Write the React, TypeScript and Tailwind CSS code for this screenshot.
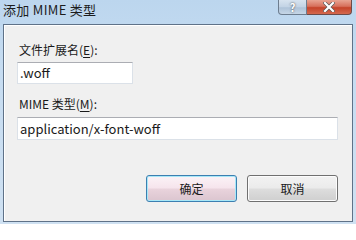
import React from "react";

const font = { fontFamily: '"Noto Sans CJK SC", "Liberation Sans", sans-serif' };

export default function App() {
  return (
    <div
      className="w-[356px] h-[224px] flex flex-col bg-[linear-gradient(180deg,#bcd6ee_0%,#c6dcf1_30%,#cfe1f2_100%)] overflow-hidden"
      style={font}
    >
      <div className="h-[24px] flex items-start justify-between shrink-0">
        <div className="pl-[3px] pt-[2px] text-[13px] leading-[16px] text-[#1c1c1c] tracking-[0.3px]">添加 MIME 类型</div>
        <div className="flex mr-[4px]">
          <div className="w-[29px] h-[15px] rounded-bl-[4px] border border-[#6d7d8f] border-t-0 bg-[linear-gradient(180deg,#d7e3ef_0%,#c2d3e5_50%,#aec3d9_55%,#c6d6e6_100%)] flex items-center justify-center text-[11px] leading-none font-bold text-white [text-shadow:0_0_2px_#333]">
            ?
          </div>
          <div className="w-[45px] h-[15px] rounded-br-[4px] border border-[#6d4a48] border-t-0 border-l-0 bg-[linear-gradient(180deg,#e8a493_0%,#d7705c_45%,#c5432a_55%,#d4694f_100%)] flex items-center justify-center">
            <svg width="12" height="10" viewBox="0 0 12 10">
              <path d="M2 1 L10 9 M10 1 L2 9" stroke="#555" strokeWidth="3.4" strokeLinecap="square" />
              <path d="M2 1 L10 9 M10 1 L2 9" stroke="#fff" strokeWidth="2.2" strokeLinecap="square" />
            </svg>
          </div>
        </div>
      </div>
      <div className="mx-[3px] h-[198px] border border-[#5f7288] bg-[#f0f0f0] shadow-[inset_1px_1px_0_#ffffff] flex flex-col shrink-0">
        <div className="pl-[15px] mt-[17px] text-[12px] leading-[16px] text-[#1a1a1a]">
          文件扩展名(<span className="underline underline-offset-2">E</span>):
        </div>
        <div className="ml-[13px] mt-[4px] w-[116px] h-[22px] bg-white border border-[#dbe1e8] border-t-[#abadb3] flex items-center pl-[2px] text-[13px] text-[#1a1a1a]">
          .woff
        </div>
        <div className="pl-[15px] mt-[12px] text-[12px] leading-[16px] text-[#1a1a1a]">
          MIME 类型(<span className="underline underline-offset-2">M</span>):
        </div>
        <div className="ml-[13px] mt-[5px] w-[321px] h-[23px] bg-white border border-[#dbe1e8] border-t-[#abadb3] flex items-center pl-[2px] text-[13px] text-[#1a1a1a]">
          application/x-font-woff
        </div>
        <div className="flex ml-[142px] mt-[35px] gap-[10px]">
          <div className="w-[91px] h-[27px] rounded-[3px] border border-[#3c7fb1] shadow-[inset_0_0_0_1px_#a8e8f8] bg-[linear-gradient(180deg,#fbf3f7_0%,#f6e4ec_48%,#e9d3dc_52%,#dbc5cf_100%)] flex items-center justify-center text-[12px] text-[#1a1a1a]">
            确定
          </div>
          <div className="w-[91px] h-[27px] rounded-[3px] border border-[#707070] shadow-[inset_0_0_0_1px_#fcfcfc] bg-[linear-gradient(180deg,#f2f2f2_0%,#ebebeb_48%,#dddddd_52%,#cfcfcf_100%)] flex items-center justify-center text-[12px] text-[#1a1a1a]">
            取消
          </div>
        </div>
      </div>
    </div>
  );
}
